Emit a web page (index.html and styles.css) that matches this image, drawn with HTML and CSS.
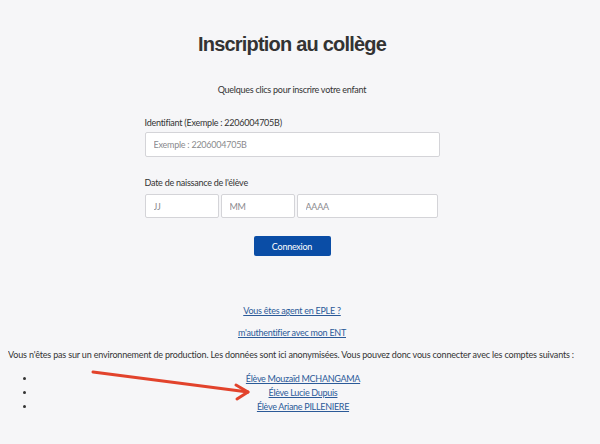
FILE: index.html
```html
<!DOCTYPE html>
<html lang="fr">
<head>
<meta charset="utf-8">
<title>Inscription au collège</title>
<link rel="stylesheet" href="styles.css">
</head>
<body>
<main class="page">
  <h1 class="title">Inscription au collège</h1>
  <p class="subtitle">Quelques clics pour inscrire votre enfant</p>
  <form class="form">
    <label class="label" for="ident">Identifiant (Exemple : 2206004705B)</label>
    <input class="input input-full" id="ident" type="text" placeholder="Exemple : 2206004705B">
    <label class="label label-date">Date de naissance de l'élève</label>
    <div class="date-row">
      <input class="input input-jj" type="text" placeholder="JJ">
      <input class="input input-mm" type="text" placeholder="MM">
      <input class="input input-aaaa" type="text" placeholder="AAAA">
    </div>
    <div class="actions">
      <button class="btn" type="button">Connexion</button>
    </div>
  </form>
  <div class="links">
    <a href="#" class="link">Vous êtes agent en EPLE ?</a>
    <a href="#" class="link">m'authentifier avec mon ENT</a>
  </div>
</main>
<section class="dev">
  <p class="dev-text">Vous n'êtes pas sur un environnement de production. Les données sont ici anonymisées. Vous pouvez donc vous connecter avec les comptes suivants :</p>
  <ul class="accounts">
    <li><a href="#" class="link">Élève Mouzaïd MCHANGAMA</a></li>
    <li><a href="#" class="link">Élève Lucie Dupuis</a></li>
    <li><a href="#" class="link">Élève Ariane PILLENIERE</a></li>
  </ul>
  <svg class="arrow" width="170" height="40" viewBox="0 0 170 40">
    <path d="M3 3 L158 23" stroke="#e2432c" stroke-width="3" stroke-linecap="round" fill="none"/>
    <path d="M146 16 L158 23 L147 30" stroke="#e2432c" stroke-width="3" stroke-linecap="round" stroke-linejoin="round" fill="none"/>
  </svg>
</section>
</body>
</html>
```
FILE: styles.css
```css
html { background: #f6f6f8; }
body {
  margin: 8px 24px 0 8px;
  font-family: Lato, "Noto Sans", sans-serif;
  color: #333;
  font-size: 9px;
  letter-spacing: -0.25px;
  position: relative;
}
.page {
  display: flex;
  flex-direction: column;
  align-items: center;
}
.title {
  font-family: "Liberation Sans", Arial, sans-serif;
  font-weight: 700;
  font-size: 20px;
  letter-spacing: -0.8px;
  color: #333;
  margin: 24px 0 0;
  line-height: 24px;
}
.subtitle {
  margin: 28px 0 0;
  line-height: 12px;
}
.form {
  width: 295px;
  margin-top: 21px;
  display: flex;
  flex-direction: column;
}
.label {
  line-height: 12px;
  color: #333;
}
.input {
  box-sizing: border-box;
  height: 25px;
  border: 1px solid #d4d4d8;
  border-radius: 2px;
  background: #fff;
  padding: 0 8px;
  font-family: Lato, "Noto Sans", sans-serif;
  font-size: 9px;
  letter-spacing: -0.25px;
  color: #333;
  outline: none;
}
.input::placeholder { color: #8a8a8e; }
.input-full { width: 295px; margin-top: 3px; }
.label-date { margin-top: 20px; }
.date-row {
  display: flex;
  gap: 2px;
  margin-top: 5px;
}
.date-row .input { height: 24px; }
.input-jj { width: 74px; }
.input-mm { width: 74px; }
.input-aaaa { width: 141px; }
.actions {
  display: flex;
  justify-content: center;
  margin-top: 18px;
}
.btn {
  width: 77px;
  height: 20px;
  background: #0a4da6;
  color: #fff;
  border: none;
  border-radius: 2px;
  font-family: Lato, "Noto Sans", sans-serif;
  font-size: 9px;
  letter-spacing: -0.25px;
  padding: 0;
}
.links {
  display: flex;
  flex-direction: column;
  align-items: center;
  gap: 10px;
  margin-top: 49px;
}
.link {
  color: #2b5a98;
  text-decoration: underline;
  line-height: 12px;
}
.dev { position: relative; margin-top: 9px; letter-spacing: -0.17px; }
.dev-text { margin: 0; line-height: 14px; }
.accounts {
  margin: 10px 0 0;
  padding: 0 6px 0 28px;
}
.accounts li {
  text-align: center;
  line-height: 14px;
  letter-spacing: -0.3px;
}
.arrow {
  position: absolute;
  left: 82px;
  top: 21px;
}
```
